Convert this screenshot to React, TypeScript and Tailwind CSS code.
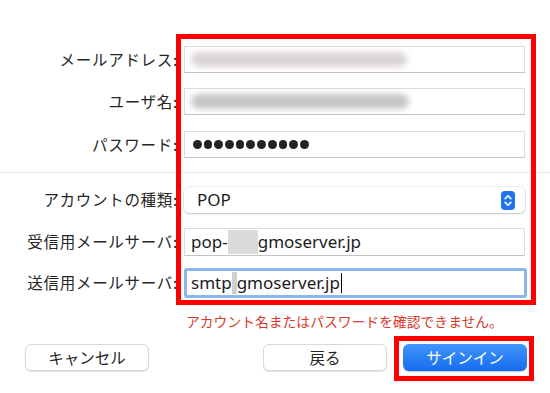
const jp = "font-['Noto_Sans_CJK_JP',sans-serif]";
const latin = "font-['Noto_Sans','Noto_Sans_CJK_JP',sans-serif]";

function Row({ label, children }: { label: string; children: React.ReactNode }) {
  return (
    <div className="flex items-center">
      <div className={`w-[178px] shrink-0 text-right text-[15.5px] tracking-[0.7px] text-[#262626] ${jp}`}>
        {label}:
      </div>
      <div className="ml-[6px] w-[341px]">{children}</div>
    </div>
  );
}

function Field({ children, h = "h-[27px]" }: { children?: React.ReactNode; h?: string }) {
  return (
    <div
      className={`${h} flex items-center border border-[#dcdcdc] border-b-[#c4c4c4] bg-white px-[6px] text-[17px] text-[#1c1c1c] ${latin}`}
    >
      {children}
    </div>
  );
}

function Button({ children, primary }: { children: React.ReactNode; primary?: boolean }) {
  return (
    <button
      className={`h-[27px] w-[124px] rounded-[6px] text-[15.5px] ${jp} ${
        primary
          ? "bg-gradient-to-b from-[#4195fa] to-[#166cf0] text-white shadow-[0_1px_1px_rgba(0,0,0,0.2)]"
          : "border border-[#d8d8d8] bg-white text-[#262626] shadow-[0_1px_1px_rgba(0,0,0,0.12)]"
      }`}
    >
      {children}
    </button>
  );
}

export default function App() {
  return (
    <div className="relative h-[393px] w-[550px] overflow-hidden bg-white">
      <div className="pt-[46px]">
        <Row label="メールアドレス">
          <Field>
            <div className="h-[15px] w-[216px] rounded-full bg-[#dcd4d4] blur-[3px]" />
          </Field>
        </Row>
        <div className="mt-[15px]">
          <Row label="ユーザ名">
            <Field>
              <div className="h-[15px] w-[218px] rounded-full bg-[#c6c6c6] blur-[3px]" />
            </Field>
          </Row>
        </div>
        <div className="mt-[16px]">
          <Row label="パスワード">
            <Field>
              <div className="flex gap-[2px] pl-[2px]">
                {Array.from({ length: 11 }).map((_, i) => (
                  <span key={i} className="h-[8.7px] w-[8.7px] rounded-full bg-[#222]" />
                ))}
              </div>
            </Field>
          </Row>
        </div>

        <div className="mt-[14px] h-px w-full bg-[#e6e6e6]" />

        <div className="mt-[14px]">
          <Row label="アカウントの種類">
            <div
              className={`flex h-[26px] items-center justify-between rounded-[5px] bg-white pl-[13px] pr-[10px] text-[17px] text-[#1c1c1c] shadow-[0_0_0_1px_rgba(0,0,0,0.06),0_1px_2px_rgba(0,0,0,0.18)] ${latin}`}
            >
              <span>POP</span>
              <span className="flex h-[19px] w-[14px] items-center justify-center rounded-[4px] bg-[#1f73f0]">
                <svg width="8" height="13" viewBox="0 0 8 13" fill="none" stroke="white" strokeWidth="1.6" strokeLinecap="round" strokeLinejoin="round">
                  <path d="M1.2 4.6 4 1.8l2.8 2.8" />
                  <path d="M1.2 8.4 4 11.2l2.8-2.8" />
                </svg>
              </span>
            </div>
          </Row>
        </div>

        <div className="mt-[15px]">
          <Row label="受信用メールサーバ">
            <Field h="h-[28px]">
              <span>pop-</span>
              <span className="h-[24px] w-[30px] bg-[#dadada]" />
              <span>gmoserver.jp</span>
            </Field>
          </Row>
        </div>

        <div className="mt-[12px]">
          <Row label="送信用メールサーバ">
            <div
              className={`flex h-[30px] w-[343px] items-center rounded-[3px] border-[3px] border-[#8cb6ef] bg-white px-[4px] text-[17px] text-[#1c1c1c] ${latin}`}
            >
              <span>smtp</span>
              <span className="h-[22px] w-[5px] bg-[#cfcfcf]" />
              <span>gmoserver.jp</span>
              <span className="ml-px h-[20px] w-px bg-black" />
            </div>
          </Row>
        </div>

        <div className={`ml-[186px] mt-[14px] text-[13.8px] leading-[18px] text-[#d8392c] ${jp}`}>
          アカウント名またはパスワードを確認できません。
        </div>

        <div className="mt-[14px] flex pl-[25px]">
          <Button>キャンセル</Button>
          <div className="ml-[114px]">
            <Button>戻る</Button>
          </div>
          <div className="ml-[16px]">
            <Button primary>サインイン</Button>
          </div>
        </div>
      </div>

      {/* annotation boxes */}
      <div className="absolute left-[176px] top-[34px] h-[271px] w-[360px] border-[5px] border-[#ff0000]" />
      <div className="absolute left-[394px] top-[336px] h-[45px] w-[140px] border-[5px] border-[#ff0000]" />
    </div>
  );
}
